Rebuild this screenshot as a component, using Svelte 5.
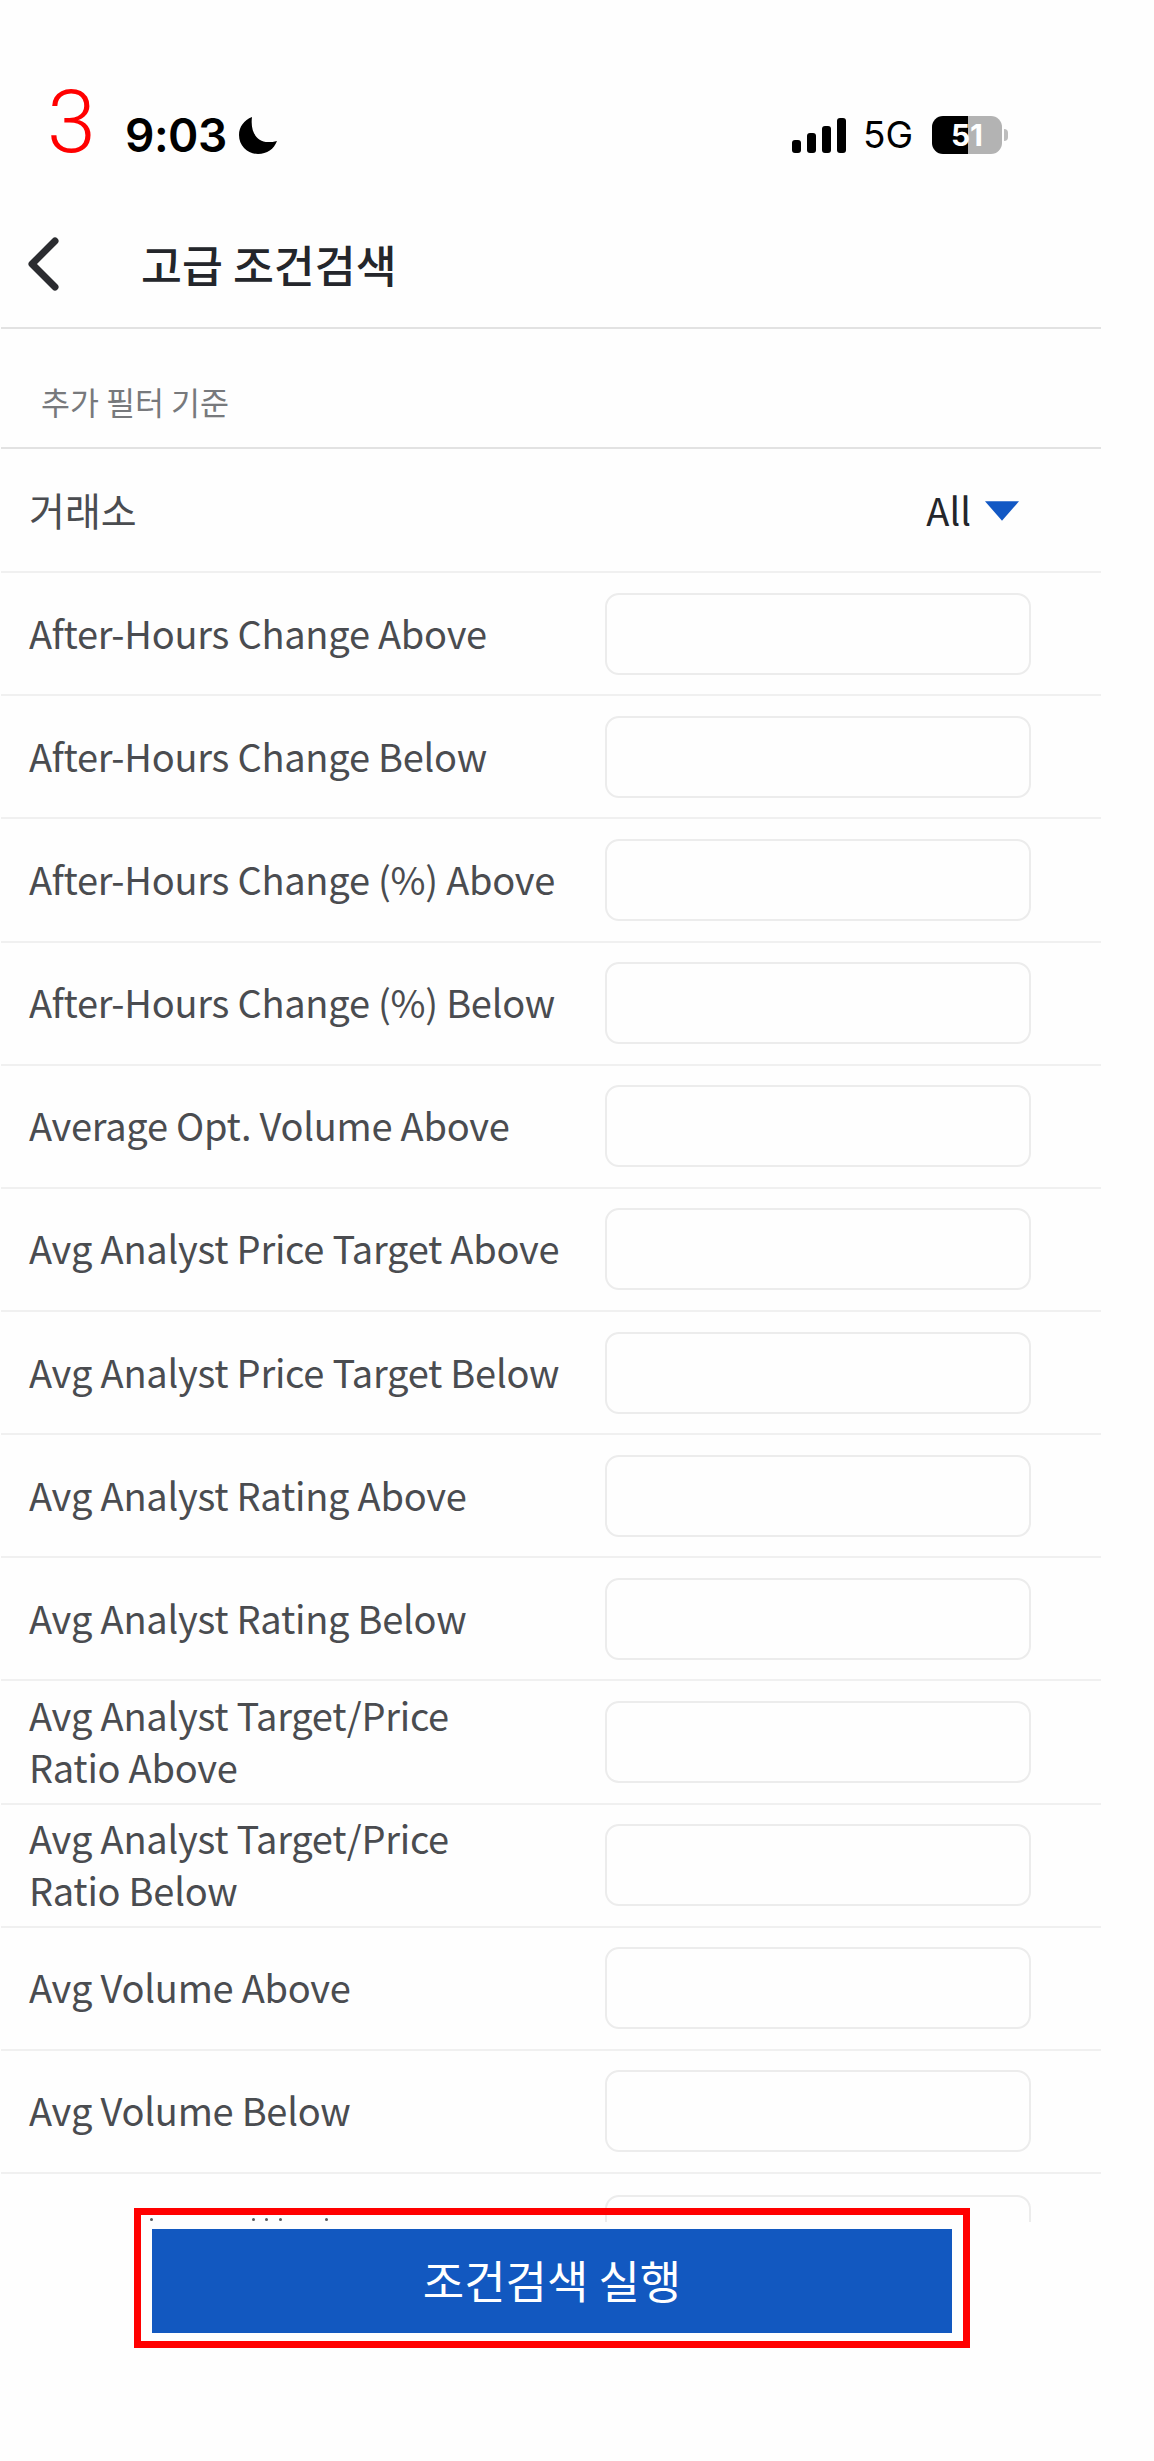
<script>
    const rows = [
        ["After-Hours Change Above"],
        ["After-Hours Change Below"],
        ["After-Hours Change (%) Above"],
        ["After-Hours Change (%) Below"],
        ["Average Opt. Volume Above"],
        ["Avg Analyst Price Target Above"],
        ["Avg Analyst Price Target Below"],
        ["Avg Analyst Rating Above"],
        ["Avg Analyst Rating Below"],
        ["Avg Analyst Target/Price", "Ratio Above"],
        ["Avg Analyst Target/Price", "Ratio Below"],
        ["Avg Volume Above"],
        ["Avg Volume Below"]
    ]
    // tips of the next row's label, cut off by the scroll area
    const specks = [149, 251, 264, 278, 324]
</script>

<main class="app">
    <div class="status">
        <span class="step">3</span>
        <span class="time">9:03</span>
        <svg class="moon" viewBox="0 0 38 37" width="38" height="37">
            <path d="M13 0C5 3 0 10 0 18c0 11 9 19 19 19 9 0 16-5 19-13-3 1-6 1-9 1C18 25 11 15 13 0z" fill="#000" />
        </svg>
        <div class="status-right">
            <div class="signal">
                <i class="b1"></i><i class="b2"></i><i class="b3"></i><i class="b4"></i>
            </div>
            <span class="net">5G</span>
            <div class="battery">51</div>
        </div>
    </div>

    <header class="top">
        <svg class="back" viewBox="0 0 32 54" width="32" height="54">
            <path d="M28 4L5 27l23 23" fill="none" stroke="#2b2c30" stroke-width="7" stroke-linecap="round" stroke-linejoin="round" />
        </svg>
        <h1>고급 조건검색</h1>
    </header>

    <div class="section">추가 필터 기준</div>

    <div class="filters">
        <div class="row select-row">
            <span class="label ko">거래소</span>
            <div class="select">
                <span>All</span>
                <svg viewBox="0 0 35 20" width="34" height="20"><path d="M0 0h35L17.500 20z" fill="#1258c4" /></svg>
            </div>
        </div>
        {#each rows as lines}
            <div class="row">
                <span class="label">{#each lines as line}<span class="line">{line}</span>{/each}</span>
                <input type="text" />
            </div>
        {/each}
        <div class="row last">
            <span class="label"></span>
            <input type="text" />
            {#each specks as x}
                <i class="speck" style="left: {x}px"></i>
            {/each}
        </div>
    </div>

    <div class="footer">
        <div class="button-wrap">
            <div class="run">조건검색 실행</div>
            <div class="frame"></div>
        </div>
    </div>
</main>

<style>
    :global(body) {
        margin: 0;
        background: #fefefe;
    }

    .app {
        width: 1154px;
        height: 2461px;
        overflow: hidden;
        background: #fefefe;
        font-family: "Noto Sans CJK KR", "Noto Sans", sans-serif;
    }

    .status {
        height: 200px;
        box-sizing: border-box;
        padding: 70px 152px 0 47px;
        display: flex;
        align-items: center;
        color: #000;
    }

    .step {
        font-family: Roboto, sans-serif;
        font-weight: 300;
        font-size: 88px;
        line-height: 86px;
        color: #ff0000;
        width: 78px;
        margin-top: -26px;
    }

    .time {
        font-family: Inter, sans-serif;
        font-weight: 600;
        font-size: 46px;
        line-height: 50px;
        letter-spacing: -0.5px;
    }

    .moon {
        margin-left: 12px;
    }

    .status-right {
        margin-left: auto;
        display: flex;
        align-items: center;
    }

    .signal {
        display: flex;
        align-items: flex-end;
        gap: 6px;
        height: 35px;
    }

    .signal i {
        width: 9px;
        background: #000;
        border-radius: 3px;
    }

    .b1 { height: 13px; }
    .b2 { height: 20px; }
    .b3 { height: 27px; }
    .b4 { height: 35px; }

    .net {
        font-family: Inter, sans-serif;
        font-size: 37px;
        line-height: 40px;
        margin-left: 17px;
    }

    .battery {
        position: relative;
        margin-left: 19px;
        width: 70px;
        height: 38px;
        border-radius: 11px;
        background: linear-gradient(90deg, #000 51%, #b3b3b3 51%);
        color: #fff;
        font-family: Inter, sans-serif;
        font-weight: 700;
        font-size: 30px;
        line-height: 38px;
        text-align: center;
    }

    .battery::after {
        content: "";
        position: absolute;
        left: 72px;
        top: 13px;
        width: 4px;
        height: 12px;
        border-radius: 0 6px 6px 0;
        background: #bdbdbd;
    }

    .top {
        height: 129px;
        box-sizing: border-box;
        display: flex;
        align-items: center;
        border-bottom: 2px solid #e2e2e2;
        width: 1100px;
        margin-left: 1px;
        padding-left: 26px;
    }

    .back {
        margin-top: 0;
    }

    h1 {
        margin: 0 0 0 82px;
        font-size: 44.5px;
        font-weight: 500;
        color: #24262b;
        line-height: 60px;
    }

    .section {
        height: 120px;
        box-sizing: border-box;
        width: 1100px;
        margin-left: 1px;
        padding: 51px 0 0 40px;
        font-size: 31.5px;
        line-height: 42px;
        color: #77797c;
        border-bottom: 2px solid #e2e2e2;
    }

    .filters {
        height: 1773px;
        overflow: hidden;
    }

    .row {
        position: relative;
        width: 1100px;
        margin-left: 1px;
        height: 123.15px;
        box-sizing: border-box;
        border-bottom: 2px solid #f0f0f0;
        padding-left: 28px;
        display: flex;
        align-items: center;
    }

    .select-row {
        height: 124.15px;
        justify-content: space-between;
        padding-right: 82px;
    }

    .last {
        border-bottom: 0;
    }

    .label {
        width: 576px;
        flex: none;
        font-size: 38px;
        line-height: 52px;
        color: #4a4c50;
        letter-spacing: -0.25px;
        padding-bottom: 2px;
    }

    .label.ko {
        font-size: 39px;
        letter-spacing: 0;
    }

    .line {
        display: block;
    }

    input {
        width: 426px;
        height: 82px;
        box-sizing: border-box;
        border: 2px solid #ececec;
        border-radius: 14px;
        background: #fefefe;
        padding: 0;
        margin: 0;
        outline: none;
    }

    .select {
        display: flex;
        align-items: center;
        gap: 14px;
        font-size: 38px;
        line-height: 52px;
        color: #24262b;
    }

    .select svg {
        margin-top: 2px;
    }

    .speck {
        position: absolute;
        top: 44px;
        width: 3px;
        height: 3px;
        border-radius: 2px;
        background: #55575a;
    }

    .footer {
        padding-top: 7px;
    }

    .button-wrap {
        position: relative;
        width: 800px;
        margin-left: 152px;
    }

    .run {
        height: 104px;
        background: #1258c0;
        color: #fff;
        font-size: 45px;
        line-height: 102px;
        text-align: center;
    }

    .frame {
        position: absolute;
        top: -21px;
        left: -18px;
        right: -18px;
        bottom: -15px;
        border: 7.5px solid #ff0000;
    }
</style>
